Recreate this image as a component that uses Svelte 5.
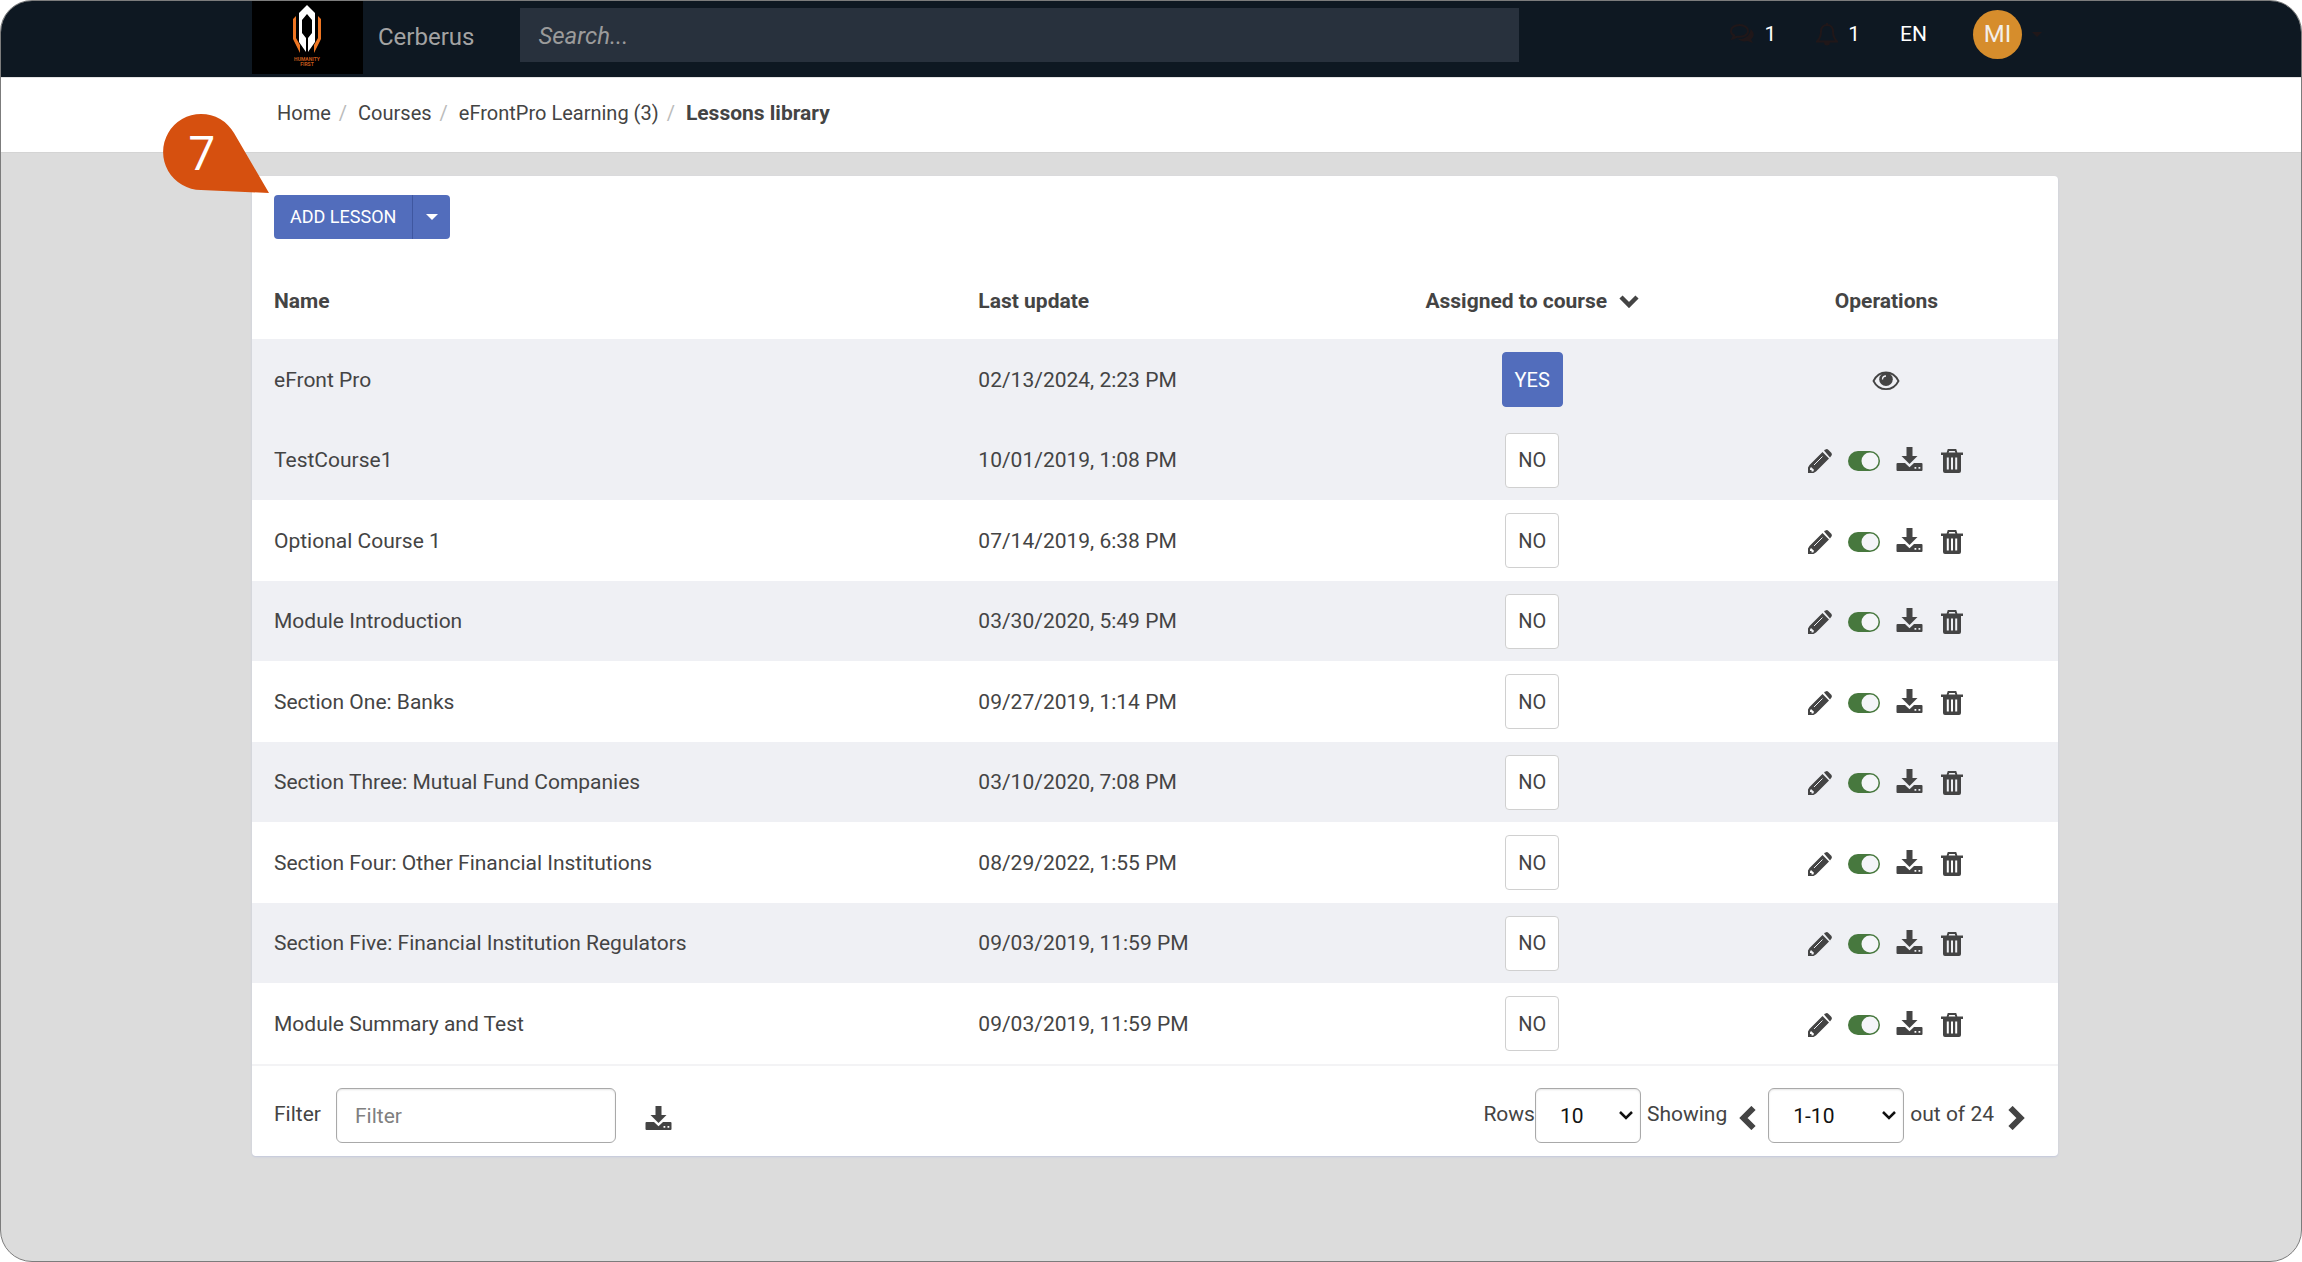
<script lang="ts">
  type Lesson = { name: string; updated: string; assigned: boolean };

  const crumbs = ['Home', 'Courses', 'eFrontPro Learning (3)'];

  const lessons: Lesson[] = [
    { name: 'eFront Pro', updated: '02/13/2024, 2:23 PM', assigned: true },
    { name: 'TestCourse1', updated: '10/01/2019, 1:08 PM', assigned: false },
    { name: 'Optional Course 1', updated: '07/14/2019, 6:38 PM', assigned: false },
    { name: 'Module Introduction', updated: '03/30/2020, 5:49 PM', assigned: false },
    { name: 'Section One: Banks', updated: '09/27/2019, 1:14 PM', assigned: false },
    { name: 'Section Three: Mutual Fund Companies', updated: '03/10/2020, 7:08 PM', assigned: false },
    { name: 'Section Four: Other Financial Institutions', updated: '08/29/2022, 1:55 PM', assigned: false },
    { name: 'Section Five: Financial Institution Regulators', updated: '09/03/2019, 11:59 PM', assigned: false },
    { name: 'Module Summary and Test', updated: '09/03/2019, 11:59 PM', assigned: false },
  ];

  let search = $state('');
  let filter = $state('');
  let rows = $state('10');
  let range = $state('1-10');

  const visible = $derived(
    lessons.filter((l) => l.name.toLowerCase().includes(filter.toLowerCase()))
  );
</script>

{#snippet downloadIcon()}
  <svg width="28" height="26" viewBox="0 0 28 26" aria-hidden="true">
    <path d="M10.5 1h6v9h5L13.5 18 5.5 10h5z" />
    <path
      fill-rule="evenodd"
      d="M1.500 17H9l4.500 4.200L18 17h7.500q1 0 1 1v6q0 1-1 1h-24q-1 0-1-1v-6q0-1 1-1zM18.500 21v1.800h1.800V21zM22.500 21v1.800h1.800V21z"
    />
  </svg>
{/snippet}

<div class="page">
  <header class="topbar">
    <a class="logo" href="#home" aria-label="Home">
      <svg width="111" height="74" viewBox="0 0 111 74" aria-hidden="true">
        <path fill="#fff" fill-rule="evenodd" d="M55 4l8 8v29l-7 10V37l4-5V19l-5-6-5 6v13l4 5v14l-7-10V12z" />
        <path fill="#ee7623" d="M44 15v22l4 7v8l-7-14V18zM66 15v22l-4 7v8l7-14V18z" />
        <text x="55" y="60" class="logo-text">HUMANITY</text>
        <text x="55" y="65" class="logo-text">FIRST</text>
      </svg>
    </a>
    <span class="brand">Cerberus</span>
    <input class="search" type="text" placeholder="Search..." aria-label="Search" bind:value={search} />
    <nav class="user-nav">
      <button class="nav-item" aria-label="Messages">
        <svg width="24" height="20" viewBox="0 0 24 20" aria-hidden="true">
          <path
            class="dim-line"
            d="M9.500 1C5 1 1 3.500 1 7c0 2 1 3.500 3 4.500L2.500 14.500 7 12.700C13 13.500 18 11 18 7c0-3.500-4-6-8.500-6z"
          />
          <path class="dim" d="M20.500 5c4 3 4.500 7.500.5 10.500l2 3.500-5.500-2c-4 1-7.500 0-9.500-2C14 15.500 20.500 12 20.500 5z" />
        </svg>
        <span>1</span>
      </button>
      <button class="nav-item" aria-label="Notifications">
        <svg width="22" height="24" viewBox="0 0 22 24" aria-hidden="true">
          <path
            class="dim-line"
            d="M11 1v2C7 3 5 6 5 9.500 5 15 3.500 17 1 19.500h20C18.500 17 17 15 17 9.500 17 6 15 3 11 3"
          />
          <path class="dim" d="M8 20h6q0 3.500-3 3.500T8 20z" />
        </svg>
        <span>1</span>
      </button>
      <button class="nav-item">EN</button>
      <button class="nav-item account" aria-label="MI account">
        <span class="avatar">MI</span>
        <svg width="10" height="5" viewBox="0 0 10 5" aria-hidden="true"><path class="dim" d="M0 0h10L5 5z" /></svg>
      </button>
    </nav>
  </header>

  <nav class="breadcrumb" aria-label="Breadcrumb">
    {#each crumbs as crumb}
      <a href="#{crumb}">{crumb}</a>
      <span class="sep">/</span>
    {/each}
    <strong>Lessons library</strong>
  </nav>

  <main class="content">
    <div class="callout">
      <svg width="118" height="80" viewBox="0 0 118 80" aria-hidden="true">
        <path fill="#d6500f" d="M38 76A38 38 0 1 1 71 19L106 79z" />
        <text x="25" y="56" class="callout-text">7</text>
      </svg>
    </div>
    <section class="card">
      <div class="toolbar">
        <button class="add">ADD LESSON</button>
        <button class="add-more" aria-label="More options">
          <svg width="12" height="6" viewBox="0 0 12 6" aria-hidden="true"><path fill="#fff" d="M0 0h12L6 6z" /></svg>
        </button>
      </div>

      <table>
        <thead>
          <tr>
            <th class="name">Name</th>
            <th class="updated">Last update</th>
            <th class="assigned">
              <span class="sorted">
                Assigned to course
                <svg width="20" height="14" viewBox="0 0 20 14" aria-hidden="true">
                  <path fill="none" stroke="#444" stroke-width="4.500" d="M2 3l8 8 8-8" />
                </svg>
              </span>
            </th>
            <th class="operations">Operations</th>
          </tr>
        </thead>
        <tbody>
          {#each visible as lesson, i}
            <tr class:shaded={i === 0 || i % 2 === 1}>
              <td>{lesson.name}</td>
              <td>{lesson.updated}</td>
              <td class="assigned">
                <button class="flag" class:yes={lesson.assigned}>{lesson.assigned ? 'YES' : 'NO'}</button>
              </td>
              <td>
                <div class="ops">
                  {#if lesson.assigned}
                    <button class="icon" aria-label="Preview">
                      <svg width="28" height="20" viewBox="0 0 28 20" aria-hidden="true">
                        <path
                          fill="none"
                          stroke="#444"
                          stroke-width="1.800"
                          d="M1.500 10C4 5 8.500 1.500 14 1.500S24 5 26.500 10C24 15 19.500 18.200 14 18.200S4 15 1.500 10z"
                        />
                        <circle cx="14" cy="8.200" r="6.800" />
                        <path fill="none" stroke="#eff0f4" stroke-width="1.300" d="M10.500 8.500q0-3.500 3.500-3.500" />
                      </svg>
                    </button>
                  {:else}
                    <button class="icon" aria-label="Edit">
                      <svg width="24" height="24" viewBox="0 0 24 24" aria-hidden="true">
                        <path fill-rule="evenodd" d="M0 24v-5.500L1.500 16 14.500 3 21 9.500 8 22.500 5.500 24zM2 19.500v1.500h1.500v1.500h1.800l.7-1.800-3-2.700z" />
                        <path d="M16 1.500L17.500.5q1.500-1 3 .5l2.500 2.500q1.500 1.500.5 3L22 8.500z" />
                        <path fill="none" stroke="#eff0f4" stroke-width="1" d="M6 16L14.500 7.500" />
                      </svg>
                    </button>
                    <button class="icon" aria-label="Deactivate">
                      <svg width="32" height="20" viewBox="0 0 32 20" aria-hidden="true">
                        <rect width="32" height="20" rx="10" fill="#47783e" />
                        <circle cx="22" cy="10" r="8.500" fill="#f4f5f8" />
                      </svg>
                    </button>
                    <button class="icon raised" aria-label="Export">{@render downloadIcon()}</button>
                    <button class="icon" aria-label="Delete">
                      <svg width="24" height="24" viewBox="0 0 24 24" aria-hidden="true">
                        <path fill="none" stroke="#444" stroke-width="2" d="M7.500 4l1-3h7l1 3" />
                        <path d="M1 3.500h22V6H1z" />
                        <path fill-rule="evenodd" d="M3 6h18v16q0 2-2 2H5q-2 0-2-2zM6.800 8.500v12h2v-12zM11 8.500v12h2v-12zM15.200 8.500v12h2v-12z" />
                      </svg>
                    </button>
                  {/if}
                </div>
              </td>
            </tr>
          {/each}
        </tbody>
      </table>

      <footer>
        <label for="filter">Filter</label>
        <input id="filter" class="field" type="text" placeholder="Filter" bind:value={filter} />
        <button class="icon" aria-label="Download list">{@render downloadIcon()}</button>

        <div class="pager">
          <label for="rows">Rows</label>
          <select id="rows" class="field rows" bind:value={rows}>
            <option>10</option>
            <option>20</option>
            <option>50</option>
          </select>
          <label class="showing" for="range">Showing</label>
          <button class="icon" aria-label="Previous page">
            <svg width="17" height="24" viewBox="0 0 17 24" aria-hidden="true">
              <path fill="none" stroke="#444" stroke-width="6" d="M14.500 2L4.500 12l10 10" />
            </svg>
          </button>
          <select id="range" class="field range" bind:value={range}>
            <option>1-10</option>
            <option>11-20</option>
            <option>21-24</option>
          </select>
          <span class="total">out of 24</span>
          <button class="icon" aria-label="Next page">
            <svg width="17" height="24" viewBox="0 0 17 24" aria-hidden="true">
              <path fill="none" stroke="#444" stroke-width="6" d="M2.500 2l10 10-10 10" />
            </svg>
          </button>
        </div>
      </footer>
    </section>
  </main>
</div>

<style>
  :global(body) {
    background: #fff;
  }

  .page {
    box-sizing: border-box;
    min-height: 100vh;
    overflow: hidden;
    border: 1px solid #7c7c7c;
    border-radius: 32px;
    background: #dcdcdc;
    color: #444;
    font-family: Roboto, sans-serif;
    font-size: 21px;
    line-height: 30px;
  }

  button,
  input,
  select {
    box-sizing: border-box;
    margin: 0;
    font: inherit;
  }

  button {
    padding: 0;
    border: 0;
    background: none;
    color: inherit;
    cursor: pointer;
  }

  a {
    color: inherit;
    text-decoration: none;
  }

  svg {
    display: block;
    fill: #444;
  }

  /* top bar */
  .topbar {
    display: flex;
    align-items: flex-start;
    height: 76px;
    padding: 0 243px 0 251px;
    background: #0e1822;
  }

  .logo {
    height: 73px;
    background: #000;
    overflow: hidden;
  }

  .logo-text {
    fill: #c65a1c;
    font-size: 5px;
    font-weight: 700;
    text-anchor: middle;
  }

  .brand {
    padding: 21px 0 0 15px;
    color: #a3a3a3;
    font-size: 24px;
  }

  .search {
    flex: 1;
    height: 54px;
    margin: 7px 0 0 46px;
    padding: 1px 18px 0;
    border: 0;
    background: #28313d;
    color: #ddd;
    font-size: 24px;
    font-style: italic;
  }

  .search::placeholder {
    color: #9b9b9b;
    opacity: 1;
  }

  .user-nav {
    display: flex;
    align-items: center;
    gap: 40px;
    height: 66px;
    margin-left: 211px;
    padding-right: 16px;
    color: #fff;
  }

  .nav-item {
    display: flex;
    align-items: center;
    gap: 10px;
  }

  .account {
    margin-left: 6px;
  }

  .dim {
    fill: #201719;
  }

  .dim-line {
    fill: none;
    stroke: #201719;
    stroke-width: 2;
  }

  .avatar {
    width: 49px;
    border-radius: 50%;
    background: #d68d2c;
    color: #f3efe9;
    font-size: 24px;
    line-height: 49px;
    text-align: center;
  }

  /* breadcrumb */
  .breadcrumb {
    display: flex;
    align-items: center;
    height: 76px;
    padding: 0 276px 5px;
    box-sizing: border-box;
    border-top: 1px solid #e4e4e4;
    border-bottom: 1px solid #d4d4d4;
    background: #fff;
    font-size: 20px;
  }

  .breadcrumb strong {
    font-size: 21px;
  }

  .sep {
    padding: 0 11px 0 8px;
    color: #bbb;
  }

  /* lessons card */
  .content {
    position: relative;
    padding: 23px 243px 90px 251px;
  }

  .card {
    border-radius: 4px;
    background: #fff;
    box-shadow: 0 1px 2px #c3c8dc;
  }

  .callout {
    position: absolute;
    top: -39px;
    left: 162px;
  }

  .callout-text {
    fill: #fff;
    font-family: "Open Sans", sans-serif;
    font-size: 48px;
  }

  .toolbar {
    display: flex;
    padding: 19px 22px 0;
  }

  .add,
  .add-more {
    height: 44px;
    background: #526dbc;
    color: #fff;
  }

  .add {
    padding: 0 16px;
    border-radius: 4px 0 0 4px;
    font-size: 18px;
  }

  .add-more {
    display: grid;
    place-items: center;
    width: 38px;
    border-left: 1px solid #3f57a0;
    border-radius: 0 4px 4px 0;
  }

  table {
    width: 100%;
    table-layout: fixed;
    border-collapse: collapse;
  }

  th,
  td {
    box-sizing: border-box;
    height: 81px;
    padding: 0 22px;
  }

  th {
    height: 100px;
    padding-top: 24px;
    font-weight: 700;
    text-align: left;
  }

  .name {
    width: 39%;
  }

  .updated {
    width: 22%;
  }

  .assigned {
    width: 20%;
    padding-right: 4px;
    padding-left: 0;
    text-align: center;
  }

  .operations {
    width: 19%;
    text-align: center;
  }

  .sorted {
    display: flex;
    align-items: center;
    justify-content: center;
    gap: 12px;
  }

  .shaded {
    background: #eff0f4;
  }

  .shaded + .shaded td,
  tr:not(.shaded) + .shaded td {
    height: 80px;
  }

  .flag {
    height: 55px;
    padding: 0 12px;
    border: 1px solid #d0d0d0;
    border-radius: 4px;
    background: #fff;
    font-size: 20px;
  }

  .flag.yes {
    border-color: #526dbc;
    background: #526dbc;
    color: #fff;
  }

  .ops {
    display: flex;
    align-items: center;
    justify-content: center;
    gap: 16px;
    padding-top: 2px;
  }

  .raised {
    padding-bottom: 4px;
  }

  /* filter and paging */
  footer {
    display: flex;
    align-items: center;
    padding: 22px 33px 13px 22px;
    border-top: 2px solid #f3f3f5;
  }

  footer label,
  .total {
    padding-bottom: 4px;
  }

  footer .icon {
    padding-top: 5px;
  }

  .field {
    height: 55px;
    border: 1px solid #a9a9a9;
    border-radius: 6px;
    background: #fff;
    box-shadow: inset 0 1px 2px #e4e4e4;
  }

  #filter {
    width: 280px;
    margin: 0 29px 0 15px;
    padding: 0 18px;
  }

  #filter::placeholder {
    color: #808080;
    opacity: 1;
  }

  .pager {
    display: flex;
    align-items: center;
    margin-left: auto;
  }

  select {
    padding: 0 24px;
    appearance: none;
    color: #111;
  }

  select.field {
    background: #fff url("data:image/svg+xml,%3Csvg xmlns='http://www.w3.org/2000/svg' width='14' height='9'%3E%3Cpath d='M1 1l6 6 6-6' fill='none' stroke='%23111' stroke-width='2.500'/%3E%3C/svg%3E") no-repeat right 7px center;
  }

  .rows {
    width: 106px;
  }

  .showing {
    margin: 0 12px 0 6px;
  }

  .range {
    width: 136px;
    margin: 0 6px 0 12px;
  }

  .total {
    margin-right: 14px;
  }
</style>
